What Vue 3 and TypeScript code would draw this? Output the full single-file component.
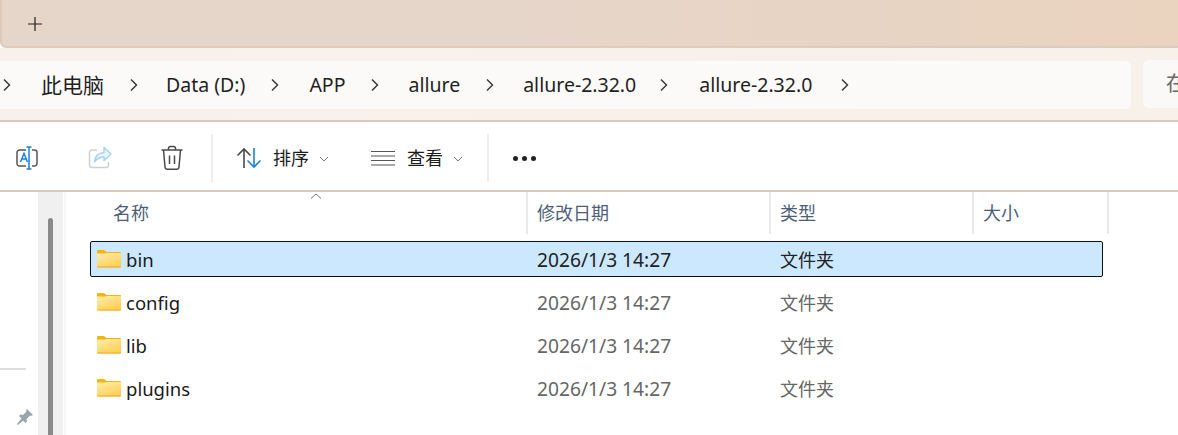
<script setup lang="ts">
const crumbs = [
  { label: '此电脑', cls: 'c1' },
  { label: 'Data (D:)', cls: 'c2' },
  { label: 'APP', cls: 'c3' },
  { label: 'allure', cls: 'c4' },
  { label: 'allure-2.32.0', cls: 'c5' },
  { label: 'allure-2.32.0', cls: 'c6' },
]
const files = ['bin', 'config', 'lib', 'plugins']
</script>

<template>
  <div class="window">
    <header class="tabbar">
      <svg class="plus" width="16" height="16" viewBox="0 0 16 16"><path d="M8 1v14M1 8h14" stroke="#1f1f1f" stroke-width="1.2" fill="none" /></svg>
    </header>

    <nav class="addressbar">
      <div class="crumbs">
        <svg class="chev first" width="8" height="14" viewBox="0 0 8 14"><path d="M1 1.5 6.5 7 1 12.500" stroke="#333" stroke-width="1.400" fill="none" /></svg>
        <template v-for="c in crumbs" :key="c.cls">
          <span class="crumb" :class="c.cls">{{ c.label }}</span>
          <svg class="chev" width="8" height="14" viewBox="0 0 8 14"><path d="M1 1.5 6.5 7 1 12.500" stroke="#333" stroke-width="1.400" fill="none" /></svg>
        </template>
      </div>
      <div class="search">在</div>
    </nav>

    <section class="toolbar">
      <button class="tool t-rename" aria-label="重命名">
        <svg width="26" height="26" viewBox="0 0 26 26">
          <path d="M11 5H4.500A2.500 2.500 0 0 0 2 7.500v11A2.500 2.500 0 0 0 4.500 21H11M17 5h2.500A2.500 2.500 0 0 1 22 7.500v11a2.500 2.500 0 0 1-2.500 2.500H17" stroke="#555" stroke-width="1.500" fill="none" />
          <path d="M14 2v22M11.500 2h5M11.500 24h5" stroke="#1a83d6" stroke-width="1.500" fill="none" />
          <path d="M5.500 17 9 8.500 12.500 17M6.700 14h4.600" stroke="#1a83d6" stroke-width="1.500" fill="none" />
        </svg>
      </button>
      <button class="tool t-share" aria-label="共享">
        <svg width="26" height="26" viewBox="0 0 26 26">
          <path d="M10 5H5a2.500 2.500 0 0 0-2.500 2.500V20A2.500 2.500 0 0 0 5 22.500h14a2.500 2.500 0 0 0 2.500-2.500v-3" stroke="#d0d0d0" stroke-width="1.500" fill="none" />
          <path d="M17 2.500 24 9l-7 6.500V12c-4 0-7 1.300-9.500 5 .5-5.500 3.500-9 9.500-9.500z" stroke="#a9d3f3" stroke-width="1.500" fill="#eaf4fc" stroke-linejoin="round" />
        </svg>
      </button>
      <button class="tool t-trash" aria-label="删除">
        <svg width="24" height="26" viewBox="0 0 24 26">
          <path d="M1.500 5h21M8.500 5V3.500A2 2 0 0 1 10.500 1.500h3a2 2 0 0 1 2 2V5M3.500 5l1.500 17a2.500 2.500 0 0 0 2.500 2.300h9A2.500 2.500 0 0 0 19 22l1.500-17M9.500 10.500v8.500M14.500 10.500v8.500" stroke="#4a4a4a" stroke-width="1.500" fill="none" />
        </svg>
      </button>
      <i class="divider d1"></i>
      <button class="tool-text t-sort">
        <svg width="28" height="22" viewBox="0 0 28 22">
          <path d="M8 21V2M1.500 8.500 8 2l6.500 6.500" stroke="#4a4a4a" stroke-width="1.600" fill="none" />
          <path d="M18 1v19M11.500 13.500 18 20l6.500-6.500" stroke="#1a83d6" stroke-width="1.600" fill="none" />
        </svg>
        <span>排序</span>
        <svg class="down" width="10" height="6" viewBox="0 0 10 6"><path d="M1 1l4 4 4-4" stroke="#777" stroke-width="1" fill="none" /></svg>
      </button>
      <button class="tool-text t-view">
        <svg width="24" height="16" viewBox="0 0 24 16">
          <path d="M0 1.500h24M0 6h24M0 10.500h24M0 15h24" stroke="#555" stroke-width="1.200" fill="none" />
        </svg>
        <span>查看</span>
        <svg class="down" width="10" height="6" viewBox="0 0 10 6"><path d="M1 1l4 4 4-4" stroke="#777" stroke-width="1" fill="none" /></svg>
      </button>
      <i class="divider d2"></i>
      <button class="more" aria-label="更多"><b></b><b></b><b></b></button>
    </section>

    <main class="content">
      <aside class="sidebar">
        <div class="nav-pane">
          <hr class="nav-line" />
          <svg class="pin" width="18" height="18" viewBox="0 0 18 18">
            <path d="M11 1 17 7l-2 1-1-.500-3.500 3.500.5 2.500-1.500 1.500-2.500-2.500L2 17l-1-1 4.500-5.500L3 8l1.500-1.500L7 7l3.500-3.500L10 2.500z" fill="#9aa4ab" />
          </svg>
        </div>
        <div class="track"><div class="thumb"></div></div>
      </aside>

      <div class="list">
        <div class="head">
          <div class="hcell name">名称<svg class="sort" width="12" height="6" viewBox="0 0 12 6"><path d="M1 5.500 6 1l5 4.500" stroke="#777" stroke-width="1" fill="none" /></svg></div>
          <div class="hcell">修改日期</div>
          <div class="hcell">类型</div>
          <div class="hcell">大小</div>
        </div>
        <div v-for="(f, i) in files" :key="f" class="row" :class="{ selected: i === 0 }">
          <div class="fname">
            <svg width="24" height="18" viewBox="0 0 24 18">
              <defs>
                <linearGradient :id="'fg' + i" x1="0" y1="0" x2="0.6" y2="1">
                  <stop offset="0" stop-color="#ffeeb0" />
                  <stop offset="1" stop-color="#ffcf55" />
                </linearGradient>
              </defs>
              <path d="M0 1A1 1 0 0 1 1 0h6l2.500 2H23a1 1 0 0 1 1 1v2H0z" fill="#f6b40f" />
              <path d="M0 3.500h8.500L10 3h14V16.500a1 1 0 0 1-1 1H1a1 1 0 0 1-1-1z" :fill="'url(#fg' + i + ')'" />
              <path d="M0 16.500h24v.2a.8.8 0 0 1-.8.8H.8a.8.8 0 0 1-.8-.8z" fill="#eeaa1c" />
            </svg>
            <span>{{ f }}</span>
          </div>
          <div class="fdate">2026/1/3 14:27</div>
          <div class="ftype">文件夹</div>
        </div>
      </div>
    </main>
  </div>
</template>

<style>
html, body { margin: 0; padding: 0; background: #fff; overflow: hidden; }
</style>

<style scoped>
.window {
  width: 1178px;
  height: 435px;
  display: flex;
  flex-direction: column;
  overflow: hidden;
  font-family: "Noto Sans", "Noto Sans CJK SC", sans-serif;
  font-size: 19.500px;
  color: #1c1c1c;
  background: #fff;
}
button { background: none; border: 0; padding: 0; font: inherit; color: inherit; display: flex; align-items: center; }

.tabbar {
  height: 48px;
  flex: none;
  box-sizing: border-box;
  padding-left: 25px;
  display: flex;
  align-items: center;
  background: linear-gradient(90deg, #e6d6ca 0%, #e6d6ca 40%, #ead3bf 100%);
  border-bottom: 2px solid #dfcbbb;
  border-left: 2px solid #dccabd;
  border-bottom-left-radius: 6px;
}
.plus { margin-top: 2px; }

.addressbar {
  height: 74px;
  flex: none;
  box-sizing: border-box;
  background: linear-gradient(90deg, #f7f0ec, #f8f1ea);
  border-bottom: 2px solid #d9c8bb;
  padding: 13px 0 11px;
  display: flex;
  gap: 12px;
}
.crumbs {
  width: 1131px;
  flex: none;
  height: 48px;
  box-sizing: border-box;
  background: #fcfaf8;
  border-radius: 0 6px 6px 0;
  display: flex;
  align-items: center;
  padding-left: 3px;
  white-space: nowrap;
  line-height: 26px;
}
.chev { flex: none; }
.crumb { color: #1f1f1f; }
.c1 { margin: 0 26px 0 30px; font-size: 21px; }
.c2 { margin: 0 26px 0 28px; }
.c3 { margin: 0 26px 0 30px; }
.c4 { margin: 0 26px 0 29px; }
.c5 { margin: 0 24px 0 29px; }
.c6 { margin: 0 29px 0 31px; }
.search {
  flex: 1;
  height: 48px;
  margin-top: -1px;
  box-sizing: border-box;
  background: #fbf9f7;
  border-radius: 6px 0 0 6px;
  padding: 10px 0 0 23px;
  color: #666;
  line-height: 28px;
  font-size: 20px;
}

.toolbar {
  height: 70px;
  flex: none;
  box-sizing: border-box;
  border-bottom: 2px solid #d9c8bb;
  padding-top: 4px;
  display: flex;
  align-items: center;
  background: #fff;
}
.tool { flex: none; }
.t-rename { margin-left: 15px; }
.t-share { margin-left: 46px; }
.t-trash { margin-left: 47px; }
.divider { width: 2px; height: 48px; flex: none; background: #eeeeee; }
.d1 { margin-left: 27px; }
.d2 { margin-left: 24px; }
.tool-text { flex: none; font-size: 18px; gap: 0; }
.tool-text span { line-height: 24px; }
.t-sort { margin-left: 23px; }
.t-sort span { margin-left: 9px; }
.t-view { margin-left: 42px; }
.t-view span { margin-left: 12px; }
.down { margin-left: 10px; margin-top: 1px; }
.more { margin-left: 24px; gap: 4px; }
.more b { width: 5px; height: 5px; border-radius: 50%; background: #222; display: block; }

.content { flex: 1; min-height: 0; display: flex; }
.sidebar { width: 66px; flex: none; display: flex; border-right: 2px solid #f6f6f6; box-sizing: border-box; }
.nav-pane { width: 38px; flex: none; position: relative; display: flex; flex-direction: column; }
.nav-line { width: 26px; height: 2px; margin: 176px 0 0; border: 0; background: #dddddd; }
.pin { margin: 38px 0 0 16px; }
.track { width: 25px; flex: none; background: #f0f0f0; display: flex; justify-content: center; padding-top: 26px; box-sizing: border-box; }
.thumb { width: 5px; height: 240px; background: #8a8a8a; border-radius: 3px 3px 0 0; }

.list { flex: 1; min-width: 0; }
.head {
  height: 41px;
  margin-bottom: 8px;
  display: grid;
  grid-template-columns: 462px 243px 203px 135px;
  font-size: 18px;
  color: #4c607a;
}
.hcell {
  position: relative;
  box-sizing: border-box;
  padding-left: 9px;
  line-height: 42px;
  border-right: 2px solid #e9e9e9;
}
.hcell.name { padding-left: 47px; }
.sort { position: absolute; left: 244px; top: 1px; }

.row {
  margin: 0 0 0 24px;
  width: 1013px;
  height: 36px;
  margin-bottom: 7px;
  display: grid;
  grid-template-columns: 437px 243px 1fr;
  align-items: center;
  box-sizing: border-box;
  border: 1px solid transparent;
  border-radius: 2px;
}
.row.selected { background: #cce8ff; border-color: #111; }
.fname { display: flex; align-items: center; gap: 5px; padding-left: 6px; color: #1a1a1a; font-size: 18.500px; }
.fname svg { flex: none; margin-top: 0; }
.fdate { font-size: 19.200px; padding-left: 9px; color: #666; }
.ftype { font-size: 18px; padding-left: 9px; color: #666; }
.row.selected .fdate, .row.selected .ftype { color: #222; }
</style>
